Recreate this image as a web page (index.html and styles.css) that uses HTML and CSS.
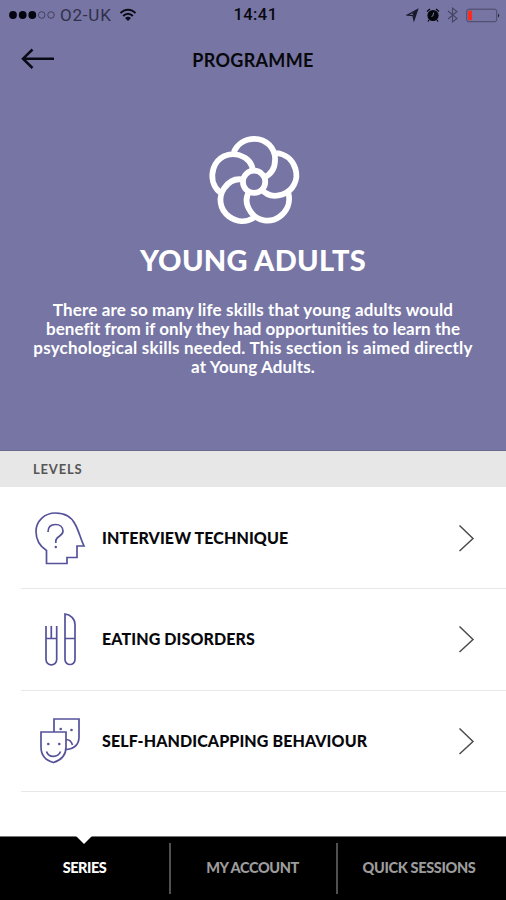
FILE: index.html
```html
<!DOCTYPE html>
<html lang="en">
<head>
<meta charset="utf-8">
<title>Programme</title>
<link rel="stylesheet" href="styles.css">
</head>
<body>
<main class="app">
  <section class="hero">
    <div class="status">
      <div class="status-left">
        <svg width="47" height="12" viewBox="0 0 47 12"><g fill="#05050f"><circle cx="4" cy="6" r="3.9"/><circle cx="13.7" cy="6" r="3.9"/><circle cx="23.3" cy="6" r="3.9"/></g><g fill="none" stroke="#34344e" stroke-width=".8"><circle cx="32.7" cy="6" r="3.3"/><circle cx="42" cy="6" r="3.3"/></g></svg>
        <span class="carrier">O2-UK</span>
        <svg class="wifi" width="18" height="14" viewBox="0 0 18 14"><g fill="none" stroke="#0b0b18" stroke-width="2"><path d="M1.5 5.2C5.5.6 12.5.6 16.5 5.2"/><path d="M4.2 8C7 5 11 5 13.8 8"/></g><path d="M6 9.900C7.800 8.300 10.200 8.300 12 9.900L9 13Z" fill="#0b0b18"/></svg>
      </div>
      <span class="clock">14:41</span>
      <svg class="status-right" width="96" height="18" viewBox="0 0 96 18">
        <path d="M1.500 9L11.500 3.500L8 14L7 9.500Z" fill="none" stroke="#17172a" stroke-width="1.300"/><path d="M6 7.500L11.500 3.500L8 13L7.500 9Z" fill="#17172a"/>
        <circle cx="27" cy="9.500" r="5.600" fill="#06060d"/><path d="M21 5.500L24 3M30 3L33 5.500M23 14L22 15.500M31 14L32 15.500" stroke="#06060d" stroke-width="1.300"/><path d="M27.700 6.500L26.800 10L25.500 10.500" fill="none" stroke="#77759f"/>
        <path d="M42 5L51 12.500L46.500 16V2L51 5.500L42 13" fill="none" stroke="#454464" stroke-width="1.100"/>
        <rect x="60.700" y="3.200" width="30" height="12.500" rx="2" fill="none" stroke="#4a4968"/><path d="M62 4.700H66V14.200H62Z" fill="#fb2b20"/><path d="M92 7.500Q94.500 9.500 92 11.500Z" fill="#222234"/>
      </svg>
    </div>
    <header class="header">
      <svg class="back" width="34" height="22" viewBox="0 0 34 22"><path d="M33 10.700H2M11.500 1.500L2 10.700L11.500 20" fill="none" stroke="#0a0a16" stroke-width="2.500"/></svg>
      <h1 class="header-title">PROGRAMME</h1>
      <span></span>
    </header>
    <svg class="flower" width="120" height="110" viewBox="0 0 360 330">
      <defs><path id="petal" d="M122 83C133 57 157 42 185 42C221 42 248 70 248 104C248 132 236 151 212 160"/></defs>
      <g fill="none" stroke="#fff" stroke-width="17.500" transform="translate(2 3) scale(.985)">
        <use href="#petal"/><use href="#petal" transform="rotate(72 185 173)"/><use href="#petal" transform="rotate(144 185 173)"/><use href="#petal" transform="rotate(216 185 173)"/><use href="#petal" transform="rotate(288 185 173)"/>
        <circle cx="184" cy="173" r="34"/>
      </g>
    </svg>
    <h2 class="title">YOUNG ADULTS</h2>
    <p class="copy"><span class="l1">There are so many life skills that young adults would</span><span class="l2">benefit from if only they had opportunities to learn the</span><span class="l3">psychological skills needed. This section is aimed directly</span><span class="l4">at Young Adults.</span></p>
  </section>
  <h3 class="levels">LEVELS</h3>
  <ul class="list">
    <li class="row">
      <svg class="icon" width="80" height="100" viewBox="0 0 80 100"><g fill="none" stroke="#55529a" stroke-width="1.700"><path d="M25.500 75.500V62.500C18.500 58 15 52 15 43.500C15 33 23.500 25 34.500 25C44 25 50.500 29 54 36C58 43 59.500 51 63 58H56V69.500H46V75.500Z"/><path d="M27 44C27 38.500 30.500 36.500 34.500 36.500C39 36.500 42 39.300 42 43.300C42 48.500 34.800 48 34.800 53V55"/></g><circle cx="34.800" cy="59" r="1.200" fill="#55529a"/></svg>
      <span class="label">INTERVIEW TECHNIQUE</span>
      <svg class="chevron" width="18" height="28" viewBox="0 0 18 28"><path d="M1.500 1.500L15 14.500L1.500 27" fill="none" stroke="#4c4c4c" stroke-width="1.500"/></svg>
    </li>
    <li class="row">
      <svg class="icon" width="80" height="100" viewBox="0 0 80 100"><path d="M25 37V70.500A5.300 5.300 0 0 0 35.700 70.500V37M30.300 37V49.500M25 49.500H35.700M44 25V70.500A5 5 0 0 0 54 70.500V35.500C54 30 49.500 25.500 44 25ZM44 49.500H54" fill="none" stroke="#55529a" stroke-width="1.700"/></svg>
      <span class="label">EATING DISORDERS</span>
      <svg class="chevron" width="18" height="28" viewBox="0 0 18 28"><path d="M1.500 1.500L15 14.500L1.500 27" fill="none" stroke="#4c4c4c" stroke-width="1.500"/></svg>
    </li>
    <li class="row">
      <svg class="icon" width="80" height="100" viewBox="0 0 80 100"><g transform="translate(-1 0)"><path d="M34 40.500V28H59V46C59 53 54.500 57.500 46.500 58.500M21 41H46V56C46 65 40 69.500 33.500 71.500C26 69.500 21 65 21 56ZM26.500 60.500C28.500 67 38 67 40.500 60.500M46 48.500C49 48.500 51.500 50.500 52.500 54" fill="none" stroke="#55529a" stroke-width="1.700"/><g fill="#55529a"><circle cx="28.300" cy="53" r="1.300"/><circle cx="39.300" cy="53" r="1.300"/><circle cx="40.700" cy="38" r="1.300"/><circle cx="51.500" cy="39" r="1.300"/></g></g></svg>
      <span class="label">SELF-HANDICAPPING BEHAVIOUR</span>
      <svg class="chevron" width="18" height="28" viewBox="0 0 18 28"><path d="M1.500 1.500L15 14.500L1.500 27" fill="none" stroke="#4c4c4c" stroke-width="1.500"/></svg>
    </li>
  </ul>
  <nav class="tabs">
    <a class="tab active">SERIES</a>
    <a class="tab">MY ACCOUNT</a>
    <a class="tab last">QUICK SESSIONS</a>
  </nav>
</main>
</body>
</html>
```
FILE: styles.css
```css
* { box-sizing: border-box; }
body { margin: 0; background: #fff; font-family: Lato, "Liberation Sans", sans-serif; color: #08080c; }
h1, h2, h3, p, ul { margin: 0; padding: 0; }
svg { display: block; flex: none; }
.app { width: 506px; height: 900px; display: flex; flex-direction: column; overflow: hidden; }
.hero { height: 451px; background: #7675a4; border-bottom: 1px solid #69688f; display: flex; flex-direction: column; flex: none; }
.status { height: 29px; display: grid; grid-template-columns: 1fr auto 1fr; align-items: center; padding: 0 4px 0 9px; }
.status-left { display: flex; align-items: center; }
.carrier { font-family: Roboto, sans-serif; font-size: 17px; letter-spacing: .8px; color: #30304a; margin-left: 4px; line-height: 20px; }
.wifi { margin-left: 7px; }
.clock { font-family: Roboto, sans-serif; font-size: 16.500px; font-weight: 500; letter-spacing: .4px; line-height: 20px; }
.status-right { justify-self: end; }
.header { height: 60px; display: grid; grid-template-columns: 1fr auto 1fr; align-items: center; padding: 0 21px; }
.header-title { font-size: 18px; line-height: 24px; font-weight: 700; letter-spacing: .3px; padding-top: 1px; }
.flower { margin: 35px 0 0 193px; }
.title { margin-top: 8px; text-align: center; font-size: 29px; line-height: 36px; font-weight: 900; letter-spacing: .3px; color: #fff; }
.copy { margin-top: 22px; display: flex; flex-direction: column; align-items: center; color: #fff; font-weight: 700; font-size: 17px; line-height: 19px; white-space: nowrap; }
.l1 { letter-spacing: .15px; }
.l2 { letter-spacing: .04px; }
.l3 { letter-spacing: .2px; }
.l4 { letter-spacing: .13px; }
.levels { height: 36px; flex: none; background: #e7e7e7; padding: 0 33px; font-size: 13px; line-height: 36px; letter-spacing: .8px; color: #555; }
.list { list-style: none; height: 349px; padding-top: 1px; }
.row { height: 101.330px; margin-left: 21px; border-bottom: 1.500px solid #e8e8e8; display: flex; align-items: center; }
.icon { width: 80px; }
.label { margin-left: 1px; font-size: 16px; font-weight: 900; line-height: 20px; letter-spacing: .1px; white-space: nowrap; }
.chevron { margin: 0 30px 0 auto; }
.tabs { height: 64px; background: #000; border-top: 1px solid #777; display: grid; grid-template-columns: 169px 167px 170px; }
.tab { position: relative; display: flex; align-items: center; justify-content: center; padding-bottom: 1px; color: #9c9c9c; font-size: 14px; font-weight: 900; line-height: 18px; letter-spacing: -.45px; white-space: nowrap; }
.tab:nth-child(2) { letter-spacing: -.4px; }
.tab:nth-child(2), .tab.active, .tab.last { font-size: 14.500px; }
.tab.last { padding-right: 4px; letter-spacing: -.35px; }
.tab + .tab::before { content: ""; position: absolute; left: 0; top: 6px; width: 2px; height: 51px; background: #505050; }
.tab.active { color: #fff; }
.tab.active::after { content: ""; position: absolute; left: 76px; top: -1px; border: 8px solid transparent; border-top-color: #fff; border-bottom: 0; }
```
